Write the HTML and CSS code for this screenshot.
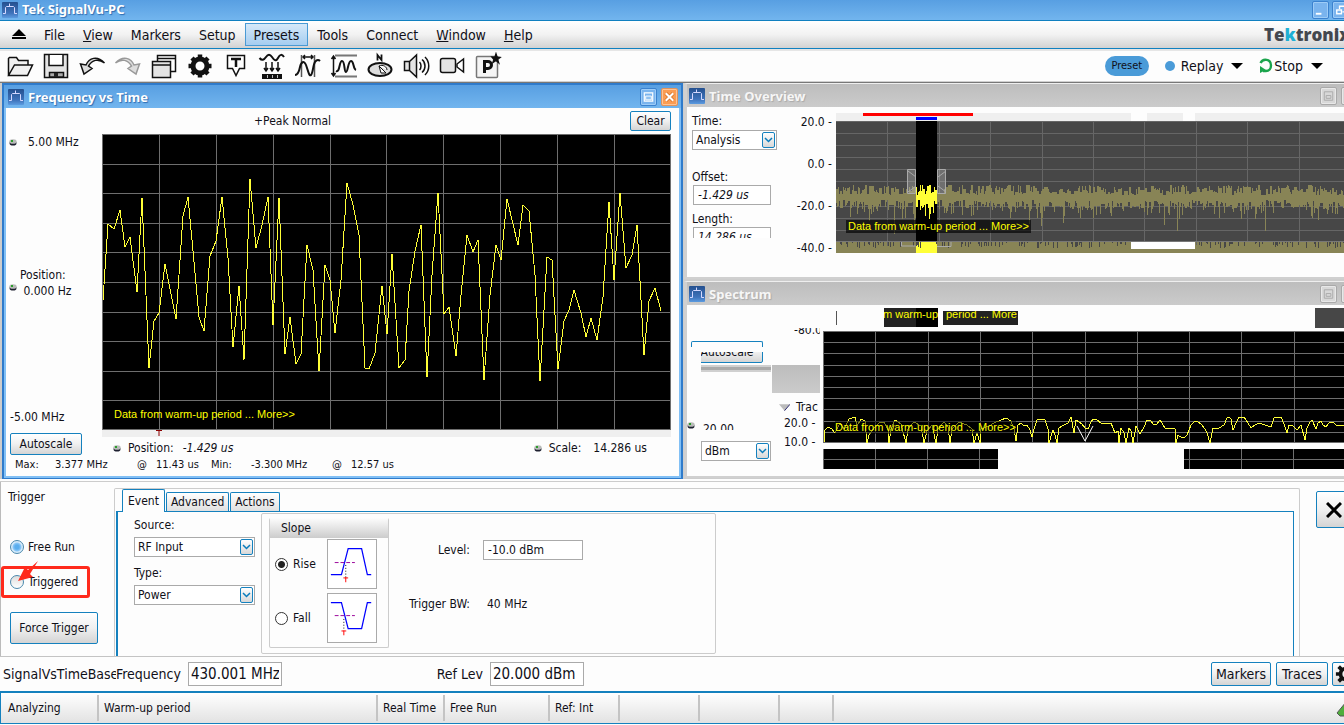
FILE: index.html
```html
<!DOCTYPE html>
<html lang="en">
<head>
<meta charset="utf-8">
<title>Tek SignalVu-PC</title>
<link rel="stylesheet" href="styles.css">
</head>
<body>
<svg class="defs" aria-hidden="true">
  <defs>
    <linearGradient id="logo-bg" x1="0" y1="0" x2="0" y2="1"><stop offset="0" stop-color="#24508f"/><stop offset=".7" stop-color="#3f73bb"/><stop offset="1" stop-color="#5b9be0"/></linearGradient>
    <symbol id="app" viewBox="0 0 16 16"><rect width="16" height="16" rx="1" fill="url(#logo-bg)"/><path d="M1 11.500h2.500V5.500l1-1h7l1 1v6H15M7.500 1.500v3" fill="none" stroke="#d4d8ff"/></symbol>
    <symbol id="knob" viewBox="0 0 8 8"><ellipse cx="4" cy="5" rx="3.500" ry="2.600" fill="#1e2030"/><ellipse cx="4" cy="3.500" rx="3.600" ry="2.300" fill="#b9bbb9"/><rect x="2" y="2" width="2" height="2" fill="#2c9c2c"/></symbol>
    <symbol id="chev" viewBox="0 0 9 6"><path d="M1 1l3.500 3.500L8 1" fill="none" stroke="#0a7cbc" stroke-width="1.500"/></symbol>
  </defs>
</svg>

<header class="titlebar">
  <svg class="app-icon"><use href="#app"/></svg>
  <h1>Tek SignalVu-PC</h1>
  <div class="win-buttons">
    <button class="wbtn" aria-label="Minimize"><svg viewBox="0 0 16 16"><rect x="3" y="11" width="6" height="2" fill="#fff"/></svg></button>
    <button class="wbtn" aria-label="Restore"><svg viewBox="0 0 16 16" fill="none" stroke="#fff" stroke-width="1.500"><path d="M7 7V4h6v6h-3"/><rect x="4" y="8" width="5" height="4"/></svg></button>
  </div>
</header>

<nav class="menubar">
  <button class="eject" aria-label="Eject"><svg viewBox="0 0 16 12"><path d="M8 0l7 7H1zM1 8h14v2H1z"/></svg></button>
  <button>File</button><button><u>V</u>iew</button><button>Markers</button><button>Setup</button><button class="current">Presets</button><button>Tools</button><button>Connect</button><button><u>W</u>indow</button><button><u>H</u>elp</button>
  <span class="brand">Te<span class="brand-k">k</span>tronix</span>
</nav>

<div class="toolbar">
  <button class="tool" aria-label="Open"><svg viewBox="0 0 28 28"><path d="M2.500 23.500V6.500l1-1h7l2 3h9.500v4.500M2.500 23.500l6-10.500h18l-5 10.500z" fill="#f1f1f1"/></svg></button>
  <button class="tool" aria-label="Save"><svg viewBox="0 0 28 28"><path d="M2.500 2.500h23v23h-23z" fill="#e4e4e4"/><path d="M7 3v10.500h14V3" fill="#fff"/><path d="M7.500 25v-4.500h14V25z" fill="#aaa"/><path d="M12 21h4v4h-4z" fill="#222" stroke="none"/></svg></button>
  <button class="tool" aria-label="Undo"><svg viewBox="0 0 28 28"><path d="M26.500 11C19 3 11 6 8 13l-5.500-1 3.500 10 8-5.500-3.500-2.500C14 8 20 6 26.500 11z" fill="#ddd"/></svg></button>
  <button class="tool dim" aria-label="Redo"><svg viewBox="0 0 28 28"><path d="M1.500 11C9 3 17 6 20 13l5.500-1L22 22l-8-5.500 3.500-2.500C14 8 8 6 1.500 11z" fill="#ddd"/></svg></button>
  <button class="tool" aria-label="Displays"><svg viewBox="0 0 28 28"><path d="M7.500 3.500h18v16h-18zM7.500 6.500h18" fill="#fff"/><path d="M2.500 9.500h18v16h-18zM2.500 13h18" fill="#e4e4e4"/></svg></button>
  <button class="tool" aria-label="Settings"><svg viewBox="0 0 28 28"><circle cx="14" cy="14" r="7" stroke-width="5"/><path d="M14 2.500v4M14 25.500v-4M2.500 14h4M25.500 14h-4M6 6l3 3M22 6l-3 3M22 22l-3-3M6 22l3-3" stroke-width="4.500"/></svg></button>
  <button class="tool" aria-label="Trigger"><svg viewBox="0 0 28 28"><path d="M5.500 3.500h17v13h-5L14 23.500l-3.500-7h-5z" fill="#fff"/><path d="M9 7h10M14 7v8" stroke-width="2.500"/></svg></button>
  <button class="tool" aria-label="Acquire"><svg viewBox="0 0 28 28"><path d="M1.500 6C4 9 6 8 8 5s4-3 6 0 4 5 6 1 4-4 6-1" stroke-width="2"/><path d="M8 10v8M14 10v8M20 10v8M6 16l2 3 2-3M12 16l2 3 2-3M18 16l2 3 2-3"/><path d="M4 24.500h20" stroke-width="5"/><path d="M9.500 23v3M14.500 23v3M19.500 23v3" stroke="#bbb" stroke-width="1"/></svg></button>
  <button class="tool" aria-label="Analysis time"><svg viewBox="0 0 28 28"><path d="M7.500 3v22M20.500 3v22" stroke="#555"/><path d="M9 5h10M11 3L9 5l2 2M17 3l2 2-2 2"/><path d="M1 23c3 0 4-3 5-8s4-7 6-2 3 12 5 10 2-10 4-13 4-2 5-1" stroke-width="2"/></svg></button>
  <button class="tool" aria-label="Amplitude"><svg viewBox="0 0 28 28"><path d="M5 3.500h22M5 24.500h22" stroke="#777" stroke-width="2"/><path d="M3.500 4v20M1.500 7l2-3 2 3M1.500 21l2 3 2-3"/><path d="M6 19c4 2 3-10 6-10s2 11 4 11 2-11 5-11 2 8 5 9" stroke-width="2"/></svg></button>
  <button class="tool" aria-label="Compass"><svg viewBox="0 0 28 28"><path d="M11.500 8.500V3l4 5V2.500" stroke-width="1.800"/><ellipse cx="14" cy="17.500" rx="11.500" ry="6.500" fill="#ddd" stroke-width="2"/><path d="M13 14l7 7h-5zM13 14c4-2 8 1 8 4" fill="#fff" stroke-width="1"/></svg></button>
  <button class="tool" aria-label="Audio"><svg viewBox="0 0 28 28"><path d="M2.500 9.500h5l7-6.500v22l-7-6.500h-5zM7.500 9.500v9" fill="#e4e4e4"/><path d="M17.500 10c2 2 2 6 0 8M20 7.500c4 3 4 10 0 13M23 5c5 5 5 13 0 18"/></svg></button>
  <button class="tool" aria-label="Record"><svg viewBox="0 0 28 28"><rect x="2.500" y="6.500" width="15" height="14" rx="2" fill="#e4e4e4"/><path d="M19 12l6.500-5v13L19 15z" fill="#fff"/></svg></button>
  <button class="tool" aria-label="Preset options"><svg viewBox="0 0 28 28"><rect x="2.500" y="4.500" width="21" height="21" rx="1" fill="#f5f5f5" stroke="#777"/><path d="M10.500 21V9.500h3.500a3 3 0 010 7h-3.500" stroke-width="3"/><path d="M22 2l1 3 3 .5-2.500 2 1 3-2.500-2-3 2 1-3-2-2.500 3 .2z" fill="#111"/></svg></button>
  <div class="run">
    <button class="preset">Preset</button>
    <button class="run-btn replay"><i class="dot"></i>Replay<i class="caret"></i></button>
    <button class="run-btn"><svg viewBox="0 0 14 16"><path d="M1.500 5C4 0 12 1 12 7.500c0 3-2 5.500-5 5.500H4" fill="none" stroke="#1ba44c" stroke-width="2.400"/><path d="M1 15V8l6 4z" fill="#1ba44c"/></svg>Stop<i class="caret"></i></button>
  </div>
</div>

<main class="workspace">
  <section class="window active">
    <header class="wtitle"><svg class="app-icon"><use href="#app"/></svg><h2>Frequency vs Time</h2>
      <button class="wbtn" aria-label="Maximize"><svg viewBox="0 0 16 16"><path d="M3.500 3.500h9v9h-9z" fill="none" stroke="#fff" stroke-width="1.300"/><path d="M5 7h6v4H5z" fill="#8fc0f0" stroke="#fff"/></svg></button>
      <button class="wbtn close" aria-label="Close"><svg viewBox="0 0 16 16"><path d="M4 4l8 8M12 4l-8 8" stroke="#d8742c" stroke-width="4"/><path d="M4 4l8 8M12 4l-8 8" stroke="#fff" stroke-width="2.200"/></svg></button>
    </header>
    <div class="fvt">
      <div class="fvt-head"><span>+Peak Normal</span><button class="btn">Clear</button></div>
      <div class="fvt-axis">
        <div class="axis-val"><svg class="knob"><use href="#knob"/></svg><span>5.00 MHz</span></div>
        <div class="axis-mid"><svg class="knob"><use href="#knob"/></svg><span>Position:<br>&nbsp;0.000 Hz</span></div>
        <div>-5.00 MHz</div>
      </div>
      <div class="plot fvt-plot">
        <svg viewBox="0 0 569 296" preserveAspectRatio="none">
          <path class="grid" d="M.5 0v296M57.500 0v296M114.500 0v296M171.500 0v296M228.500 0v296M284.500 0v296M341.500 0v296M398.500 0v296M455.500 0v296M512.500 0v296M568.500 0v296M0 .5h569M0 30.500h569M0 59.500h569M0 89.500h569M0 118.500h569M0 148.500h569M0 178.500h569M0 207.500h569M0 237.500h569M0 266.500h569M0 295.500h569"/>
          <path class="trace" transform="translate(-102 -134)" d="M103 300L108 224 114 229 120 210 125 247 130 237 137 292 142 198 149 368 154 321 159 313 165 264 176 319 183 216 188 197 193 251 199 317 204 331 210 256 216 241 222 197 228 258 233 347 239 286 244 360 250 179 256 248 262 225 268 197 273 325 279 198 285 354 290 317 296 364 301 354 307 245 313 270 319 371 325 265 330 280 335 333 341 280 347 183 353 205 359 235 365 368 369 369 375 353 382 286 387 334 392 254 399 368 405 360 409 291 415 251 421 225 427 377 432 275 438 193 444 314 449 307 456 356 461 295 467 235 473 252 478 240 484 380 490 295 496 245 501 260 507 199 518 245 523 205 529 211 535 275 540 381 547 257 552 260 558 369 564 321 569 310 574 290 581 313 586 337 591 318 597 340 603 297 609 202 614 280 620 193 626 268 632 255 637 225 644 355 649 301 655 288 661 311"/>
        </svg>
        <a class="warm fvt-warm" href="#">Data from warm-up period ... More&gt;&gt;</a>
      </div>
      <div class="fvt-auto"><button class="btn">Autoscale</button></div>
      <div class="fvt-foot">
        <div class="ruler"><svg viewBox="0 0 6 6"><path d="M0 .5h6M3 0v6" stroke="#8b0000"/></svg></div>
        <div class="scale-row"><svg class="knob"><use href="#knob"/></svg><span>Position:</span><em>-1.429 us</em><svg class="knob push"><use href="#knob"/></svg><span>Scale:</span><span class="scale-val">14.286 us</span></div>
      </div>
      <div class="readouts"><span>Max:</span><span>3.377 MHz</span><span>@</span><span>11.43 us</span><span>Min:</span><span>-3.300 MHz</span><span>@</span><span>12.57 us</span></div>
    </div>
  </section>

  <div class="side">
    <section class="window">
      <header class="wtitle"><svg class="app-icon"><use href="#app"/></svg><h2>Time Overview</h2>
        <button class="wbtn" aria-label="Maximize"><svg viewBox="0 0 16 16" fill="none" stroke="#aaa"><path d="M3.500 3.500h9v9h-9zM5.500 7.500h5v3h-5z"/></svg></button>
        <button class="wbtn cut" aria-label="Close"></button>
      </header>
      <div class="overview">
        <div class="ov-form">
          <label for="time">Time:</label>
          <div class="combo"><select id="time"><option>Analysis</option></select><span class="arrow"><svg><use href="#chev"/></svg></span></div>
          <label for="offset">Offset:</label>
          <input id="offset" value="-1.429 us">
          <label for="length">Length:</label>
          <div class="cutoff"><input id="length" value="14.286 us"></div>
        </div>
        <div class="ov-scale"><span>20.0 -</span><span>0.0 -</span><span>-20.0 -</span><span>-40.0 -</span></div>
        <div class="ov-plot">
          <svg viewBox="0 0 508 140" preserveAspectRatio="none">
            <path fill="#efefef" d="M0 0h295v8H0zM311 0h36v8h-36zM359 0h149v8H359z"/>
            <path fill="#f00" d="M27 0h110v3H27z"/><path fill="#00f" d="M80 4h21v3H80z"/>
            <path fill="#474747" d="M0 8h508v132H0z"/>
            <path class="grid ov-grid" d="M0 8.500h508M0 20.500h508M0 32.500h508M0 44.500h508M0 56.500h508M0 68.500h508M0 93.500h508M0 105.500h508M0 117.500h508M51.500 8v132M103.500 8v132M154.500 8v132M206.500 8v132M257.500 8v132M308.500 8v132M360.500 8v132M411.500 8v132M463.500 8v132"/>
            <path fill="#000" d="M80 8h21v121H80z"/>
            <path id="noise" class="bars" fill="#888456"/><path id="burst" class="bars" fill="#ffff37"/>
            <path fill="none" stroke="#777" d="M0 128.500h508"/>
            <path fill="#fff" d="M295 129h64v7h-64z"/>
            <g fill="#ccc" fill-opacity=".3" stroke="#aaa"><path d="M71.500 56.500h8v24h-8zM101.500 56.500h8v24h-8z"/><path fill="none" d="M72 58l8 6M72 79l8-6M110 58l-8 6M110 79l-8-6M65.500 129v4h14M101 133.500h14V129"/></g>
          </svg>
          <a class="warm ov-warm" href="#">Data from warm-up period ... More&gt;&gt;</a>
        </div>
      </div>
    </section>

    <section class="window spectrum-win">
      <header class="wtitle"><svg class="app-icon"><use href="#app"/></svg><h2>Spectrum</h2>
        <button class="wbtn" aria-label="Maximize"><svg viewBox="0 0 16 16" fill="none" stroke="#aaa"><path d="M3.500 3.500h9v9h-9zM5.500 7.500h5v3h-5z"/></svg></button>
        <button class="wbtn cut" aria-label="Close"></button>
      </header>
      <div class="spectrum">
        <div class="sp-form">
          <div class="stub"></div>
          <div class="stub-btn"><button class="btn">Autoscale</button></div>
          <div class="stripe"></div>
          <div class="cut-value"><svg class="knob"><use href="#knob"/></svg><span>20.00</span></div>
          <div class="combo"><select aria-label="Units"><option>dBm</option></select><span class="arrow"><svg><use href="#chev"/></svg></span></div>
        </div>
        <div class="sp-scale">
          <div class="cut-label"><span>-80.0</span></div>
          <div class="block"></div>
          <div class="trace-label"><svg viewBox="0 0 12 7"><path d="M0 0h12L6 7z" fill="#bbb"/><path d="M12 0L6 7" stroke="#22206a"/></svg>Trac</div>
          <span>20.0 -</span><span>10.0 -</span>
        </div>
        <div class="sp-plots">
          <div class="fragments">
            <i class="tick"></i>
            <div class="frag frag-a"><span class="warm">om warm-up</span></div>
            <div class="frag frag-b"><span class="warm">period ... More</span></div>
            <div class="frag frag-c"></div>
          </div>
          <div class="plot sp-plot">
            <svg viewBox="0 0 521 112" preserveAspectRatio="none">
              <path class="grid" d="M.5 0v112M52.500 0v112M105.500 0v112M157.500 0v112M209.500 0v112M262.500 0v112M314.500 0v112M366.500 0v112M418.500 0v112M471.500 0v112M0 .5h521M0 11.500h521M0 22.500h521M0 34.500h521M0 45.500h521M0 56.500h521M0 67.500h521M0 78.500h521M0 90.500h521M0 101.500h521M0 111.500h521"/>
              <path class="trace" d="M1 111L2 99 5 96 9 98 12 102 17 92 21 98 26 88 32 86 34 95 38 88 42 90 44 112 46 104 52 96 56 92 61 91 65 99 66 112 68 98 72 89 78 93 83 112 85 98 91 91 98 95 101 112 104 100 109 94 113 112 115 98 121 91 125 96 127 112 129 98 136 91 144 94 149 98 151 112 154 102 157 112 158 98 166 95 171 92 183 87 188 90 191 98 193 110 195 94 198 92 201 95 204 94 207 99 209 106 211 98 214 89 218 88 222 89 225 98 226 112 230 99 232 104 234 112 236 97 241 94 245 92 248 86 251 102 253 89 259 93 262 97 265 98 268 91 270 88 274 89 278 92 288 92 290 97 292 102 295 100 296 112 298 97 301 102 303 112 306 97 308 100 310 112 313 95 317 103 321 96 324 89 327 89 331 94 334 93 337 89 342 97 346 98 349 97 352 98 353 112 355 104 359 107 362 106 364 104 368 94 371 91 374 90 379 94 382 98 384 102 387 112 390 97 393 98 396 97 401 94 404 87 406 86 408 88 410 99 413 92 416 86 421 86 425 92 428 97 432 94 436 92 448 96 451 87 452 86 458 86 461 93 464 102 466 94 470 95 474 99 478 94 482 109 484 97 487 91 489 89 493 98 495 92 498 90 500 94 503 96 506 92 510 91 513 94 516 94 521 95"/>
              <path d="M254 95l8 15 8-15" fill="none" stroke="#fff"/>
            </svg>
            <a class="warm sp-warm" href="#">Data from warm-up period ... More&gt;&gt;</a>
          </div>
          <div class="strips"><div class="strip strip-a"></div><div class="strip strip-b"></div></div>
        </div>
      </div>
    </section>
  </div>
</main>

<section class="trigger">
  <div class="trig-mode">
    <h3>Trigger</h3>
    <label class="opt"><input type="radio" name="mode" checked>Free Run</label>
    <label class="opt flagged"><input type="radio" name="mode">Triggered
      <svg viewBox="0 0 24 22"><path d="M20 0L10 9 7 6 0 20l15-4-3-3z" fill="#ff2a1c"/></svg></label>
    <button class="btn force">Force Trigger</button>
  </div>
  <div class="tabs">
    <div class="tablist" role="tablist"><button class="tab on" role="tab">Event</button><button class="tab" role="tab">Advanced</button><button class="tab" role="tab">Actions</button></div>
    <div class="tabpage">
      <div class="source">
        <label for="source">Source:</label>
        <div class="combo"><select id="source"><option>RF Input</option></select><span class="arrow"><svg><use href="#chev"/></svg></span></div>
        <label for="type">Type:</label>
        <div class="combo"><select id="type"><option>Power</option></select><span class="arrow"><svg><use href="#chev"/></svg></span></div>
      </div>
      <div class="group">
        <fieldset class="slope">
          <div class="slope-head">Slope</div>
          <label><input type="radio" name="slope" checked>Rise<svg viewBox="0 0 50 50"><path d="M3 36h11l7-27h14l6 27h4" stroke="#00f" stroke-width="1.300"/><path d="M7 23.500h21" stroke="#909" stroke-dasharray="4 2"/><path d="M18.500 26v13" stroke="#000" stroke-dasharray="1 2"/><path d="M16 39.500h5M18.500 39v5" stroke="#f00"/></svg></label>
          <label><input type="radio" name="slope">Fall<svg viewBox="0 0 50 50"><path d="M3 9h11l7 27h14l6-27h4" stroke="#00f" stroke-width="1.300"/><path d="M7 22.500h21" stroke="#909" stroke-dasharray="4 2"/><path d="M16.500 26v12" stroke="#000" stroke-dasharray="1 2"/><path d="M14 38.500h5M16.500 38v5" stroke="#f00"/></svg></label>
        </fieldset>
        <div class="params">
          <label for="level">Level:</label><input id="level" value="-10.0 dBm">
          <span>Trigger BW:</span><span class="bw">40 MHz</span>
        </div>
      </div>
    </div>
  </div>
  <button class="btn panel-close" aria-label="Close panel"><svg viewBox="0 0 16 16"><path d="M1 1l14 14M15 1L1 15" stroke="#000" stroke-width="3"/></svg></button>
</section>

<div class="quickbar">
  <span class="context">SignalVsTimeBase</span>
  <label for="freq">Frequency</label><input id="freq" value="430.001 MHz">
  <label class="ref" for="ref">Ref Lev</label><input id="ref" value="20.000 dBm">
  <button class="btn markers">Markers</button><button class="btn traces">Traces</button>
  <button class="btn gear" aria-label="Settings"><svg viewBox="0 0 24 24" fill="none" stroke="#111"><circle cx="12" cy="12" r="6" stroke-width="4"/><path d="M12 1v4M12 19v4M1 12h4M4 4l3 3M4 20l3-3M20 4l-3 3M20 20l-3-3" stroke-width="4"/></svg></button>
</div>

<footer class="status">
  <span>Analyzing</span><span>Warm-up period</span><span>Real Time</span><span>Free Run</span><span>Ref: Int</span><span></span><span></span><span></span>
  <svg class="led" viewBox="0 0 10 16"><path d="M10 1v14H4l-3-3z" fill="#4fae3c"/><path d="M10 1L1 12l3 3h6" fill="none" stroke="#555"/></svg>
</footer>
<script src="noise.js"></script>
</body>
</html>
```

FILE: styles.css
```css
* { box-sizing: border-box; }
body {
  margin: 0;
  min-height: 100vh;
  overflow: hidden;
  display: flex;
  flex-direction: column;
  background: #fdfdfd;
  color: #101018;
  font: 12px/16px "DejaVu Sans Condensed", "Noto Sans", sans-serif;
}
button, input, select { font: inherit; color: inherit; margin: 0; padding: 0; border-radius: 0; }
button { border: 0; background: none; white-space: nowrap; }
svg { display: block; flex: none; }
h1, h2, h3 { margin: 0; font: inherit; }
.defs { position: absolute; width: 0; height: 0; }

.titlebar, .wtitle { display: flex; align-items: center; overflow: hidden; }
.titlebar { height: 21px; padding-left: 2px; background: linear-gradient(#589fe2, #72b5ee); border-bottom: 1px solid #1080c0; }
.titlebar h1, .wtitle h2 { flex: 1; color: #fff; font: bold 13px/18px "Noto Sans", sans-serif; text-shadow: 1px 1px 1px #2f6cb0; }
.titlebar h1 { padding-bottom: 2px; }
.app-icon { width: 16px; height: 16px; margin-right: 4px; }
.win-buttons { display: flex; gap: 3px; margin-right: -5px; }
.wbtn { width: 17px; height: 18px; flex: none; border: 1px solid #3b82cf; border-radius: 2px; background: #7ab4ee; box-shadow: inset 0 0 0 1px #9dccf7; }
.wbtn svg { width: 15px; height: 16px; }
.wbtn.close { background: #fb9c53; border-color: #e0935c; box-shadow: inset 0 0 0 1px #ffc393; }

.menubar { display: flex; align-items: center; height: 28px; padding-left: 1px; background: linear-gradient(#fff, #f2f2f2 50%, #d2d2d2); border-bottom: 1px solid #1080c0; font-size: 14px; overflow: hidden; }
.menubar button { height: 23px; padding: 0 8px; border: 1px solid transparent; line-height: 20px; }
.menubar .current { background: linear-gradient(#d6e9f9, #a5cdf0); border-color: #4a9ad4; }
.menubar .eject { width: 34px; padding: 0 9px; }
.eject svg { width: 16px; height: 12px; }
.brand { margin: 0 -6px 0 auto; color: #43484f; font: 800 17px/22px "Open Sans", sans-serif; }
.brand-k { color: #1fb0d4; }

.toolbar { display: flex; align-items: center; height: 33px; padding-left: 2px; border-top: 2px solid #e6e6e6; border-bottom: 1px solid #d0d0d0; background: #fdfdfd; }
.tool { width: 36px; height: 30px; padding: 0 4px; }
.tool svg { width: 28px; height: 28px; fill: none; stroke: #111; stroke-width: 1.500; }
.tool.dim svg { stroke: #999; }
.run { display: flex; align-items: center; margin-left: auto; padding-right: 21px; font-size: 14px; }
.preset { width: 44px; height: 20px; border-radius: 10px; background: #4a9bd8; font-size: 11px; }
.run-btn { display: flex; align-items: center; height: 24px; }
.replay { margin: 0 16px; }
.run-btn svg { width: 14px; height: 16px; margin-right: 1px; }
.dot { width: 10px; height: 10px; margin-right: 6px; border-radius: 50%; background: #4a9bd8; }
.caret { margin-left: 8px; border: 6px solid transparent; border-top-color: #000; border-bottom: 0; }

.workspace { display: grid; grid-template-columns: 684fr 660fr; background: #cdcdcd; border-top: 1px solid #777; }
.window { min-width: 0; border: 3px solid #d0d0d0; border-top: 1px solid #eee; border-bottom-width: 2px; background: #c6c6c6; }
.wtitle { height: 23px; gap: 2px; padding-right: 3px; }
.window .wtitle { background: linear-gradient(#bdbdbd, #cbcbcb); }
.window .wtitle .app-icon { margin: 0 2px 0 2px; }
.window h2 { color: #f6f6f6; text-shadow: 1px 1px 1px #aaa; }
.side .wtitle { margin-right: -19px; }
.side .wbtn { border: 1px solid #a9a9a9; background: #d8d8d8; box-shadow: inset 0 0 0 1px #e8e8e8; margin-right: 2px; }
.window.active { margin: 0 1px 0 2px; border: 2px solid #2f7bcb; border-bottom-width: 1px; background: #82c0f5; padding: 0 2px 2px; }
.active .wtitle { margin: 0 -2px; padding-left: 2px; background: linear-gradient(#589fe2, #72b5ee); }
.active .wbtn { margin-left: 2px; }
.active h2 { color: #fff; text-shadow: 1px 1px 1px #2f6cb0; }
.side { min-width: 0; display: flex; flex-direction: column; overflow: hidden; }
.side .window { border-right: 0; }

.btn { border: 1px solid #1581be; border-radius: 2px; background: linear-gradient(#fff, #f0f0f0 50%, #d4d4d4); }
.knob { width: 8px; height: 8px; }
.grid { fill: none; stroke: #6e6e6e; shape-rendering: crispEdges; }
.trace { fill: none; stroke: #ffff37; stroke-width: 1; shape-rendering: crispEdges; }
.bars { shape-rendering: crispEdges; }
.plot { position: relative; background: #000; }
.plot svg { width: 100%; height: 100%; }
.warm { color: #ff0; font: 11px/13px "Liberation Sans", sans-serif; text-decoration: none; white-space: nowrap; }

.fvt { display: grid; grid-template-columns: 96px 1fr; padding-right: 8px; background: #fdfdfd; }
.fvt-head { grid-column: 1 / 3; display: flex; align-items: center; justify-content: space-between; height: 26px; padding-left: 248px; }
.fvt-head .btn { width: 41px; height: 20px; }
.fvt-axis { display: flex; flex-direction: column; justify-content: space-between; padding: 0 0 5px 4px; }
.axis-val, .axis-mid { display: flex; align-items: center; gap: 11px; }
.axis-mid { gap: 3px; padding-top: 6px; align-items: flex-end; }
.axis-mid .knob { margin-bottom: 8px; }
.axis-val .knob, .axis-mid .knob { margin-left: -1px; }
.fvt-plot { height: 296px; }
.fvt-warm { position: absolute; left: 12px; bottom: 9px; }
.fvt-auto { padding: 3px 0 0 4px; }
.fvt-auto .btn { width: 72px; height: 22px; }
.ruler { height: 7px; padding-left: 54px; background: #efefef; }
.ruler svg { width: 6px; height: 6px; }
.scale-row { display: flex; align-items: center; gap: 7px; height: 21px; padding: 0 24px 0 11px; }
.scale-row em { padding-left: 2px; }
.push { margin-left: auto; }
.scale-val { padding-left: 5px; }
.readouts { grid-column: 1 / 3; display: grid; grid-template-columns: 40px 82px 19px 55px 40px 81px 19px 1fr; height: 18px; padding-left: 9px; font-size: 11px; line-height: 13px; white-space: nowrap; }

.combo { position: relative; height: 20px; }
.combo select { width: 100%; height: 100%; padding-left: 3px; border: 1px solid #aaa; background: #fff; appearance: none; }
.arrow { position: absolute; top: 2px; right: 2px; width: 13px; height: 16px; padding: 4px 1px; border: 1px solid #1581be; border-radius: 2px; background: linear-gradient(#fff, #d8d8d8); pointer-events: none; }
.arrow svg { width: 9px; height: 6px; }
input:not([type]) { border: 1px solid #aaa; background: #fff; height: 20px; padding: 0 4px; }

.overview { display: grid; grid-template-columns: 89px 60px 1fr; height: 170px; background: #fdfdfd; }
.ov-form { display: flex; flex-direction: column; padding: 6px 0 0 5px; }
.ov-form .combo { width: 85px; margin: 1px 0 19px; }
.ov-form input { width: 78px; margin-left: 1px; font-style: italic; }
#offset { margin-bottom: 6px; }
.cutoff { height: 11px; overflow: hidden; }
.ov-scale { display: flex; flex-direction: column; gap: 26px; padding: 7px 4px 0 0; text-align: right; white-space: pre; word-spacing: normal; }
.ov-plot { position: relative; padding-top: 6px; }
.ov-plot svg { width: 100%; height: 140px; }
.ov-grid { stroke: #666; }
.ov-warm { position: absolute; left: 10px; top: 113px; padding: 0 2px; background: rgba(0, 0, 0, .65); }

.spectrum-win { margin-top: 2px; }
.spectrum { display: grid; grid-template-columns: 84px 49px 3px 1fr; height: 171px; background: #fdfdfd; }
.sp-form { padding-top: 36px; }
.stub { width: 72px; height: 6px; margin-left: 4px; border: 1px solid #1581be; border-bottom: 0; border-radius: 2px 2px 0 0; }
.stub-btn { display: flex; align-items: flex-end; width: 62px; height: 11px; margin: 5px 0 2px 14px; overflow: hidden; }
.stub-btn .btn { width: 72px; height: 22px; margin-left: -10px; flex: none; }
.stripe { height: 7px; margin-left: 14px; border: solid #d0d0d0; border-width: 2px 0; background: #aaa; }
.cut-value { display: flex; gap: 8px; height: 9px; margin: 49px 0 11px; overflow: hidden; }
.sp-form .combo { width: 70px; margin-left: 14px; }
.sp-scale { display: flex; flex-direction: column; white-space: pre; overflow: hidden; }
.cut-label { display: flex; align-items: flex-end; height: 10px; margin: 23px 0 27px 23px; overflow: hidden; }
.block { height: 28px; margin-left: 1px; background: linear-gradient(#bdbdbd, #cbcbcb); }
.trace-label { display: flex; align-items: center; gap: 6px; padding: 6px 0 0 8px; }
.trace-label svg { width: 11px; height: 7px; }
.sp-scale > span { padding: 0 0 3px 13px; }
.sp-plots { grid-column: 4; min-width: 0; }
.fragments { display: flex; height: 26px; padding-top: 3px; }
.tick { width: 1px; height: 14px; margin: 3px 47px 0 13px; background: #555; }
.frag { display: flex; height: 19px; background: #222; overflow: hidden; }
.frag-a { width: 54px; justify-content: flex-end; background: linear-gradient(90deg, #222 32px, #000 0); }
.frag-b { width: 75px; height: 14px; margin: 3px 0 0 5px; padding-left: 3px; }
.frag-b .warm { margin-top: -3px; }
.frag-c { width: 29px; height: 20px; margin-left: auto; background: #474747; }
.sp-plot { height: 112px; }
.sp-warm { position: absolute; left: 12px; top: 90px; background: rgba(0, 0, 0, .5); }
.strips { display: flex; justify-content: space-between; padding-top: 6px; }
.strip { height: 20px; background: linear-gradient(90deg, #6e6e6e 1px, transparent 1px) 0 0 / 52px 20px, linear-gradient(#000 10px, #6e6e6e 10px 11px, #000 11px); }
.strip-a { width: 175px; }
.strip-b { width: 160px; background-position: 5px 0, 0 0; }

.trigger { display: flex; height: 176px; margin-top: 2px; border-top: 1px solid #ccc; border-bottom: 1px solid #c4c4c4; overflow: hidden; }
.trig-mode { width: 114px; flex: none; padding: 7px 0 0 1px; border-left: 1px solid #bbb; }
.trig-mode h3 { padding: 0 0 34px 6px; }
.opt { position: relative; display: flex; align-items: center; gap: 4px; width: 88px; height: 15px; margin-bottom: 12px; padding-left: 8px; }
input[type="radio"] { appearance: none; width: 13px; height: 13px; flex: none; border: 1px solid #333; border-radius: 50%; background: #fff; }
input[type="radio"]:checked { background: radial-gradient(#222 3px, #fff 4px); }
.opt input[type="radio"] { width: 14px; height: 14px; border-color: #4a88ac; background: linear-gradient(#ddd, #fff); }
.opt input[type="radio"]:checked { background: radial-gradient(#5aaeee 2px, #8cc8f8 4px, #d8ecfb 5px); }
.flagged { width: 89px; height: 32px; margin: 0 0 14px -1px; padding-left: 6px; border: 3px solid #ff2a1c; border-radius: 3px; }
.flagged svg { position: absolute; left: 14px; top: -8px; width: 24px; height: 22px; }
.force { width: 88px; height: 32px; margin-left: 8px; }
.tabs { flex: 1; margin-top: 6px; padding-left: 1px; border: 1px solid #ccc; border-bottom: 0; border-radius: 2px 2px 0 0; }
.tablist { display: flex; align-items: flex-end; gap: 1px; height: 22px; padding-left: 6px; }
.tab { height: 19px; padding: 0 4px; border: 1px solid #1581be; border-bottom: 0; border-radius: 2px 2px 0 0; background: linear-gradient(#fff, #e0e0e0); }
.tab.on { position: relative; height: 23px; margin-bottom: -1px; padding: 0 5px; background: #fdfdfd; }
.tabpage { display: flex; height: 150px; margin-right: 5px; padding: 1px 0 0 16px; border: 1px solid #1581be; border-left-width: 2px; border-bottom: 0; }
.source { width: 121px; padding-top: 4px; margin-right: 6px; }
.source label { display: block; padding-bottom: 4px; }
.source .combo { margin-bottom: 8px; }
.group { display: flex; width: 455px; height: 141px; padding: 4px 7px; border: 1px solid #ccc; border-radius: 2px; }
.slope { width: 120px; height: 130px; margin: 0; padding: 0; border: 1px solid #ccc; border-top: 0; border-radius: 2px; }
.slope-head { height: 20px; padding: 2px 11px; background: linear-gradient(#fdfdfd, #ccc); }
.slope label { display: flex; align-items: center; gap: 5px; height: 50px; margin: 1px 11px 4px 5px; }
.slope label svg { width: 50px; height: 50px; margin-left: auto; border: 1px solid #aaa; background: #fff; fill: none; }
.params { display: grid; grid-template-columns: 81px 100px; gap: 34px 13px; align-content: start; padding-top: 22px; line-height: 20px; }
.params label, .params span { text-align: right; }
.params .bw { text-align: left; padding-left: 4px; }
.panel-close { width: 36px; height: 37px; flex: none; margin: 9px -8px 0 16px; padding-left: 9px; }
.panel-close svg { width: 16px; height: 16px; }

.quickbar { display: flex; align-items: center; height: 34px; padding-left: 3px; font-size: 14px; overflow: hidden; }
.context { width: 113px; overflow: hidden; }
.quickbar input:not([type]) { width: 94px; height: 24px; margin-left: 7px; padding: 0 2px; font-size: 15px; }
.quickbar .ref { width: 201px; text-align: right; }
.quickbar .btn { height: 24px; }
.quickbar .markers { width: 60px; margin: 0 5px 0 auto; }
.quickbar .traces { width: 52px; }
.quickbar .gear { width: 28px; margin: 0 -16px 0 4px; padding: 0 0 0 1px; }
.gear svg { width: 24px; height: 22px; }

.status { display: grid; grid-template-columns: 96px 279px 67px 105px 70px 80px 80px 54px 1fr; height: 33px; padding: 2px 0 2px 2px; border: solid #1581be; border-width: 2px 0 1px 1px; background: linear-gradient(#fff, #e2e2e2); overflow: hidden; }
.status span { padding: 5px; border-right: 2px solid #c4c4c4; white-space: nowrap; overflow: hidden; }
.led { width: 10px; height: 16px; margin: 6px -2px 0 auto; }
```

FILE: noise.js
```js
// Fills the time overview with a repeatable noise floor, one bar per pixel column.
(function () {
  var seed = 7;
  function rnd() {
    seed = (seed * 16807) % 2147483647;
    return seed / 2147483647;
  }
  var noise = "", burst = "";
  var top = 76, low = 90;
  for (var x = 0; x < 508; x++) {
    var active = x >= 80 && x < 101;
    if (rnd() > 0.35) top = Math.round(72 + rnd() * 10);
    if (rnd() > 0.35) low = Math.round(87 + rnd() * 9);
    var end = low;
    if (rnd() > 0.75) end += Math.round(rnd() * 12);
    if (!active && rnd() > 0.96) end += Math.round(8 + rnd() * 16);
    var notch = rnd() > 0.7 ? Math.round(rnd() * 6) : 0;
    var bar = "M" + x + " " + top + "h1V" + end + "h-1zM" + x + " " + (129 + notch) + "h1V140h-1z";
    if (active) burst += bar; else noise += bar;
  }
  document.getElementById("noise").setAttribute("d", noise);
  document.getElementById("burst").setAttribute("d", burst);
})();
```
